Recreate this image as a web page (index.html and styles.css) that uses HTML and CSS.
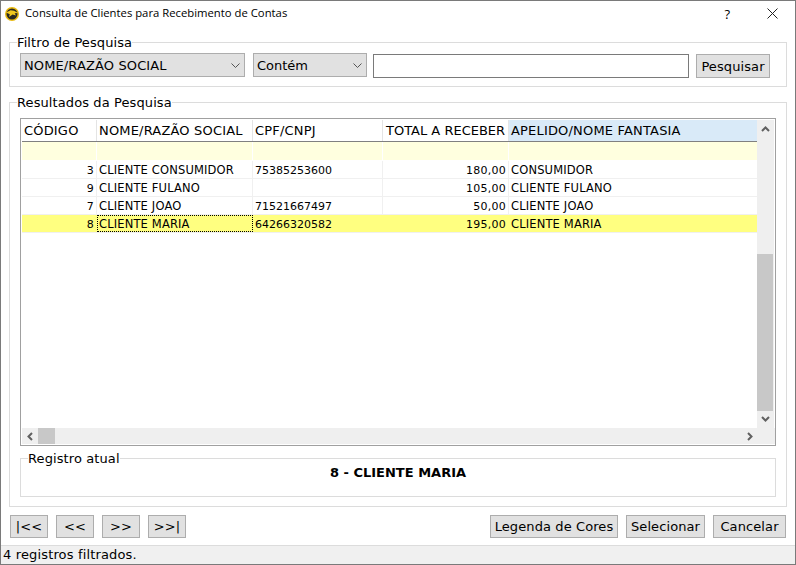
FILE: index.html
```html
<!DOCTYPE html>
<html lang="pt-BR">
  <head>
    <meta charset="UTF-8" />
    <title>Consulta de Clientes para Recebimento de Contas</title>
    <link rel="stylesheet" href="styles.css">
  </head>
  <body>
    <div class="window">
      <header class="titlebar">
        <svg class="logo" width="14" height="14" viewBox="0 0 14 14">
          <circle cx="7" cy="7" r="7" fill="#e8b90f" />
          <circle cx="7" cy="7" r="5.5" fill="#2b2a22" />
          <path d="M1 5.4 L5.6 3.2 L9 3.8 L13 6 L9.6 6.2 L11 8.4 L7.6 7.6 L4 10 L4.8 7.2 Z" fill="#f2c81e" />
        </svg>
        <span class="title">Consulta de Clientes para Recebimento de Contas</span>
        <span class="help">?</span>
        <svg class="close" width="11" height="11" viewBox="0 0 11 11">
          <path d="M0.5 0.5 L10.5 10.5 M10.5 0.5 L0.5 10.5" stroke="#222" fill="none" />
        </svg>
      </header>

      <fieldset class="group filter">
        <legend>Filtro de Pesquisa</legend>
        <div class="combo combo-field">
          <span>NOME/RAZÃO SOCIAL</span>
          <svg width="9" height="5" viewBox="0 0 9 5"><path d="M0.5 0.5 L4.5 4.5 L8.5 0.5" stroke="#555" fill="none" /></svg>
        </div>
        <div class="combo combo-mode">
          <span>Contém</span>
          <svg width="9" height="5" viewBox="0 0 9 5"><path d="M0.5 0.5 L4.5 4.5 L8.5 0.5" stroke="#555" fill="none" /></svg>
        </div>
        <input class="search" type="text" />
        <button class="btn btn-search">Pesquisar</button>
      </fieldset>

      <fieldset class="group results">
        <legend>Resultados da Pesquisa</legend>
        <div class="grid">
          <div class="grid-main">
            <div class="grid-view">
              <div class="row head">
                <div class="cell c1">CÓDIGO</div>
                <div class="cell c2">NOME/RAZÃO SOCIAL</div>
                <div class="cell c3">CPF/CNPJ</div>
                <div class="cell c4">TOTAL A RECEBER</div>
                <div class="cell c5 sorted">APELIDO/NOME FANTASIA</div>
              </div>
              <div class="row filter-row">
                <div class="cell c1"></div>
                <div class="cell c2"></div>
                <div class="cell c3"></div>
                <div class="cell c4"></div>
                <div class="cell c5"></div>
              </div>
              <div class="row">
                <div class="cell c1 num">3</div>
                <div class="cell c2">CLIENTE CONSUMIDOR</div>
                <div class="cell c3 digits">75385253600</div>
                <div class="cell c4 num">180,00</div>
                <div class="cell c5">CONSUMIDOR</div>
              </div>
              <div class="row">
                <div class="cell c1 num">9</div>
                <div class="cell c2">CLIENTE FULANO</div>
                <div class="cell c3 digits"></div>
                <div class="cell c4 num">105,00</div>
                <div class="cell c5">CLIENTE FULANO</div>
              </div>
              <div class="row">
                <div class="cell c1 num">7</div>
                <div class="cell c2">CLIENTE JOAO</div>
                <div class="cell c3 digits">71521667497</div>
                <div class="cell c4 num">50,00</div>
                <div class="cell c5">CLIENTE JOAO</div>
              </div>
              <div class="row selected">
                <div class="cell c1 num">8</div>
                <div class="cell c2 focused">CLIENTE MARIA</div>
                <div class="cell c3 digits">64266320582</div>
                <div class="cell c4 num">195,00</div>
                <div class="cell c5">CLIENTE MARIA</div>
              </div>
            </div>
            <div class="vscroll">
              <svg class="arrow" width="9" height="6" viewBox="0 0 9 6"><path d="M1 5 L4.5 1.5 L8 5" stroke="#606060" stroke-width="2" fill="none" /></svg>
              <div class="vthumb"></div>
              <svg class="arrow" width="9" height="6" viewBox="0 0 9 6"><path d="M1 1 L4.5 4.5 L8 1" stroke="#606060" stroke-width="2" fill="none" /></svg>
            </div>
          </div>
          <div class="hscroll">
            <svg class="arrow" width="6" height="9" viewBox="0 0 6 9"><path d="M5 1 L1.5 4.5 L5 8" stroke="#606060" stroke-width="2" fill="none" /></svg>
            <div class="hthumb"></div>
            <svg class="arrow" width="6" height="9" viewBox="0 0 6 9"><path d="M1 1 L4.5 4.5 L1 8" stroke="#606060" stroke-width="2" fill="none" /></svg>
          </div>
        </div>
        <fieldset class="group current">
          <legend>Registro atual</legend>
          <div class="current-text">8 - CLIENTE MARIA</div>
        </fieldset>
      </fieldset>

      <div class="actions">
        <button class="btn btn-nav">|&lt;&lt;</button>
        <button class="btn btn-nav">&lt;&lt;</button>
        <button class="btn btn-nav">&gt;&gt;</button>
        <button class="btn btn-nav">&gt;&gt;|</button>
        <button class="btn btn-legend">Legenda de Cores</button>
        <button class="btn btn-select">Selecionar</button>
        <button class="btn btn-cancel">Cancelar</button>
      </div>

      <footer class="status">4 registros filtrados.</footer>
    </div>
  </body>
</html>
```

FILE: styles.css
```css
* {
  box-sizing: border-box;
}

body {
  margin: 0;
  font-family: "DejaVu Sans", sans-serif;
  font-size: 12px;
  color: #000;
  background: #fff;
}

.window {
  width: 796px;
  height: 565px;
  border: 1px solid #7a7a7a;
  display: flex;
  flex-direction: column;
  overflow: hidden;
}

.titlebar {
  height: 26px;
  flex: none;
  display: flex;
  align-items: center;
  padding: 0 17px 1px 4px;
}

.logo {
  margin-right: 6px;
}

.title {
  flex: 1;
  font-family: "Open Sans", sans-serif;
  font-size: 11.3px;
  line-height: 14px;
  margin-bottom: 2px;
}

.help {
  font-family: "Open Sans", sans-serif;
  font-size: 13px;
  margin-right: 37px;
}

.group {
  margin: 0;
  padding: 0;
  min-width: 0;
  border: 1px solid #dcdcdc;
}

.group legend {
  padding: 0;
  margin-left: -3px;
  font-size: 13px;
  letter-spacing: 0.1px;
  line-height: 15px;
  height: 15px;
}

.filter {
  margin: 8px 8px 0;
  height: 52px;
  display: flex;
  padding: 3px 10px 0;
  align-items: flex-start;
}

.combo {
  height: 24px;
  background: #e1e1e1;
  border: 1px solid #adadad;
  display: flex;
  align-items: center;
  justify-content: space-between;
  padding: 0 4px 0 3px;
  font-size: 13px;
}

.combo-field {
  width: 225px;
  margin-right: 8px;
  letter-spacing: 0.12px;
}

.combo-mode {
  width: 114px;
  margin-right: 6px;
}

.search {
  width: 316px;
  height: 24px;
  margin: 1px 7px 0 0;
  border: 1px solid #7a7a7a;
  background: #fff;
}

.btn {
  height: 23px;
  padding: 0;
  background: #e1e1e1;
  border: 1px solid #adadad;
  font-family: "DejaVu Sans", sans-serif;
  font-size: 13px;
  letter-spacing: 0.1px;
  color: #000;
}

.btn-search {
  width: 74px;
  height: 24px;
  margin-top: 1px;
}

.results {
  margin: 8px 8px 0;
  height: 412px;
  padding: 8px 10px 0;
}

.grid {
  height: 328px;
  border: 1px solid #a0a0a0;
  display: flex;
  flex-direction: column;
}

.grid-main {
  flex: 1;
  display: flex;
  min-height: 0;
}

.grid-view {
  flex: 1;
  padding: 1px 0 0 1px;
  min-width: 0;
}

.row {
  display: flex;
  height: 18px;
  line-height: 17px;
  border-bottom: 1px solid #f0f0f0;
}

.cell {
  padding: 1px 2px 0;
  border-right: 1px solid #f0f0f0;
  white-space: nowrap;
  overflow: hidden;
  font-size: 11.5px;
  letter-spacing: 0.15px;
}

.digits {
  font-size: 11px;
  letter-spacing: 0;
}

.c1 { width: 75px; }
.c2 { width: 156px; }
.c3 { width: 130px; }
.c4 { width: 126px; }
.c5 { width: 248px; border-right: 0; }

.num {
  font-size: 11px;
  letter-spacing: 0.25px;
  text-align: right;
}

.head {
  height: 22px;
  line-height: 22px;
  border-bottom: 1px solid #808080;
}

.head .cell {
  padding-top: 0;
  font-size: 13px;
  letter-spacing: 0.18px;
  border-right-color: #e4e4e4;
}

.head .c4 {
  padding-left: 3px;
  letter-spacing: 0;
}

.sorted {
  background: #d9eaf8;
}

.filter-row {
  background: #ffffdf;
  border-bottom-color: #fff;
  height: 19px;
}

.filter-row .cell {
  border-right-color: #fff;
}

.selected {
  background: #ffff80;
  border-bottom: 1px solid #f0f0f0;
}

.selected .cell {
  border-right-color: #ffff80;
}

.focused {
  outline: 1px dotted #000;
  outline-offset: -1px;
}

.vscroll {
  width: 17px;
  margin: 1px 1px 0 0;
  background: #efefef;
  display: flex;
  flex-direction: column;
  align-items: center;
  justify-content: space-between;
  padding-top: 6px;
  position: relative;
}

.vthumb {
  position: absolute;
  left: 0;
  right: 1px;
  top: 134px;
  height: 157px;
  background: #c8c8c8;
}

.vscroll .arrow:last-child {
  margin-bottom: 6px;
}

.hscroll {
  height: 16px;
  flex: none;
  margin: 0 0 1px 1px;
  background: #efefef;
  display: flex;
  align-items: center;
  padding: 0 22px 0 5px;
}

.hthumb {
  width: 17px;
  height: 100%;
  margin: 0 auto 0 5px;
  background: #c8c8c8;
}

.current {
  margin-top: 5px;
  height: 46px;
}

.current legend {
  margin-left: 7px;
}

.current-text {
  text-align: center;
  font-weight: bold;
  font-size: 13px;
  line-height: 13px;
}

.actions {
  height: 23px;
  margin: 8px 9px 0;
  display: flex;
  gap: 8px;
  flex: none;
}

.btn-nav {
  width: 38px;
}

.btn-legend {
  width: 128px;
  margin-left: auto;
}

.btn-select {
  width: 79px;
}

.btn-cancel {
  width: 73px;
}

.status {
  margin-top: auto;
  height: 19px;
  flex: none;
  background: #f0f0f0;
  border-top: 1px solid #dcdcdc;
  padding-left: 2px;
  font-size: 13px;
  letter-spacing: 0.15px;
  line-height: 18px;
}
```
